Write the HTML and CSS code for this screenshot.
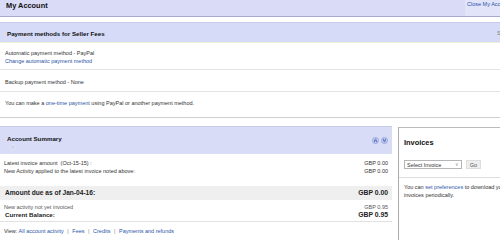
FILE: index.html
```html
<!DOCTYPE html>
<html lang="en">
<head>
  <meta charset="UTF-8" />
  <title>My Account</title>
  <link rel="stylesheet" href="styles.css">
</head>
<body>
  <div class="page">
    <div class="topbar">
      <h1>My Account</h1>
      <div class="close"><a href="#">Close My Account</a></div>
    </div>

    <section class="payment">
      <div class="panel-head">
        <h2>Payment methods for Seller Fees</h2>
        <span class="head-link">Show</span>
      </div>
      <div class="row row-auto">
        <div>Automatic payment method - PayPal</div>
        <a href="#">Change automatic payment method</a>
      </div>
      <div class="row row-backup">Backup payment method - None</div>
      <div class="row row-onetime">You can make a <a href="#">one-time payment</a> using PayPal or another payment method.</div>
    </section>

    <div class="lower">
      <section class="summary">
        <div class="summary-head">
          <div class="summary-title">
            <h2>Account Summary</h2>
            <span class="help">?</span>
          </div>
          <div class="arrows">
            <svg width="7" height="7" viewBox="0 0 8 8">
              <circle cx="4" cy="4" r="3.5" fill="#c3cdf2" stroke="#8d9bd3" stroke-width="0.8"/>
              <path d="M2.3 4.2 L4 2.6 L5.7 4.2 M2.3 5.8 L4 4.2 L5.7 5.8" fill="none" stroke="#2f4fa8" stroke-width="0.9"/>
            </svg>
            <svg width="7" height="7" viewBox="0 0 8 8">
              <circle cx="4" cy="4" r="3.5" fill="#c3cdf2" stroke="#8d9bd3" stroke-width="0.8"/>
              <path d="M2.3 2.2 L4 3.8 L5.7 2.2 M2.3 3.8 L4 5.4 L5.7 3.8" fill="none" stroke="#2f4fa8" stroke-width="0.9"/>
            </svg>
          </div>
        </div>

        <div class="lines">
          <div class="line"><span>Latest invoice amount &nbsp;(Oct-15-15) :</span><span>GBP 0.00</span></div>
          <div class="line"><span>New Activity applied to the latest invoice noted above:</span><span>GBP 0.00</span></div>
        </div>

        <div class="due"><span>Amount due as of Jan-04-16:</span><b>GBP 0.00</b></div>
        <div class="line line-small"><span>New activity not yet invoiced</span><span>GBP 0.95</span></div>
        <div class="line balance"><span>Current Balance:</span><span>GBP 0.95</span></div>

        <div class="view">
          View: <a href="#">All account activity</a> <span class="sep">|</span>
          <a href="#">Fees</a> <span class="sep">|</span>
          <a href="#">Credits</a> <span class="sep">|</span>
          <a href="#">Payments and refunds</a>
        </div>
      </section>

      <aside class="invoices">
        <h3>Invoices</h3>
        <div class="invoice-pick">
          <span class="select-wrap">
            <select>
              <option>Select Invoice</option>
            </select>
          </span>
          <button type="button">Go</button>
        </div>
        <p class="prefs">You can <a href="#">set preferences</a> to download your invoices periodically.</p>
      </aside>
    </div>
  </div>
</body>
</html>
```

FILE: styles.css
```css
html, body {
  margin: 0;
  overflow: hidden;
}

body {
  font-family: "Liberation Sans", Arial, sans-serif;
  font-size: 5.5px;
  color: #333;
  background: #fff;
}

a {
  color: #2c55a8;
  text-decoration: none;
}

.page {
  width: 520px;
}

/* top bar */
.topbar {
  display: flex;
  justify-content: space-between;
  height: 16px;
  background: #dadcf7;
  border-bottom: 1px solid #a9aacb;
}

.topbar h1 {
  margin: 0;
  padding: 2px 0 0 6px;
  font-size: 7.4px;
  line-height: 8px;
  color: #111;
}

.close {
  width: 53px;
  padding: 1px 0 0 2px;
  background: #e2e4fa;
  line-height: 6px;
}

/* payment methods */
.payment {
  margin-top: 5px;
  border-bottom: 1px solid #cfcfcf;
}

.panel-head {
  display: flex;
  justify-content: space-between;
  height: 19px;
  background: #d6dcf8;
  border-top: 1px solid #c5cae6;
  border-bottom: 1px solid #eef0d6;
}

.panel-head h2 {
  margin: 0;
  padding: 7px 0 0 7px;
  font-size: 6.2px;
  line-height: 7px;
  color: #111;
}

.head-link {
  padding: 7px 0 0;
  width: 23px;
  color: #777;
  line-height: 7px;
}

.row {
  padding: 0 5px;
  line-height: 8px;
  border-bottom: 1px solid #e4e4e4;
}

.row-auto {
  padding-top: 6px;
  height: 20px;
}

.row-backup {
  padding-top: 8px;
  height: 13px;
}

.row-onetime {
  padding-top: 7px;
  height: 18px;
  border-bottom: none;
}

/* lower area */
.lower {
  display: flex;
  gap: 6px;
  margin-top: 8px;
}

.summary {
  width: 392px;
}

.summary-head {
  display: flex;
  justify-content: space-between;
  height: 27px;
  background: #d8dcf7;
  border-top: 1px solid #c8cce8;
}

.summary-title {
  padding: 8px 0 0 7px;
}

.summary-title h2 {
  margin: 0;
  font-size: 6.2px;
  line-height: 7px;
  color: #111;
}

.help {
  display: block;
  width: 5px;
  height: 5px;
  margin: 2px 0 0 2px;
  border: 1px solid #e2e4f4;
  border-radius: 50%;
  font-size: 4px;
  line-height: 5px;
  text-align: center;
  color: #b8bcd8;
}

.arrows {
  display: flex;
  gap: 2px;
  padding: 10px 4px 0 0;
}

.lines {
  padding-top: 5px;
  margin-bottom: 11px;
}

.line {
  display: flex;
  justify-content: space-between;
  padding: 0 4px 0 4px;
  line-height: 8px;
}

.due {
  display: flex;
  justify-content: space-between;
  padding: 0 4px 0 5px;
  height: 14px;
  line-height: 14px;
  background: #efefef;
  font-size: 6.6px;
  font-weight: bold;
  color: #222;
}

.due b {
  font-size: 6.8px;
}

.line-small {
  margin-top: 4px;
  line-height: 7px;
  color: #555;
}

.balance {
  padding-left: 5px;
  line-height: 7px;
  font-size: 6.2px;
  font-weight: bold;
  color: #222;
  border-bottom: 1px solid #e2e2e2;
  padding-bottom: 3px;
}

.balance span:last-child {
  font-size: 6.8px;
}

.view {
  padding: 5px 0 0 4px;
  line-height: 8px;
}

.sep {
  color: #888;
  margin: 0 2px;
}

/* invoices box */
.invoices {
  flex: 1;
  margin-top: 1px;
  height: 120px;
  border-left: 1px solid #aaa;
  border-top: 1px solid #bbb;
}

.invoices h3 {
  margin: 0;
  padding: 11px 0 0 5px;
  font-size: 7.4px;
  line-height: 8px;
  color: #111;
}

.invoice-pick {
  display: flex;
  gap: 4px;
  margin-top: 13px;
  padding: 0 0 8px 5px;
  border-bottom: 1px solid #ddd;
}

.select-wrap {
  position: relative;
  display: block;
}

.select-wrap::after {
  content: "\2228";
  position: absolute;
  right: 3px;
  top: 1px;
  font-size: 5px;
  color: #999;
}

select {
  appearance: none;
  width: 58px;
  height: 9px;
  margin: 0;
  padding: 0 2px;
  border: 1px solid #b5b5b5;
  background: #fff;
  font-family: inherit;
  font-size: 5.5px;
  color: #333;
}

button {
  width: 15px;
  height: 9px;
  padding: 0;
  border: 1px solid #ddd;
  background: #eee;
  font-family: inherit;
  font-size: 5.5px;
  color: #555;
}

.prefs {
  margin: 0;
  padding: 5px 0 0 5px;
  width: 112px;
  line-height: 8px;
}
```
